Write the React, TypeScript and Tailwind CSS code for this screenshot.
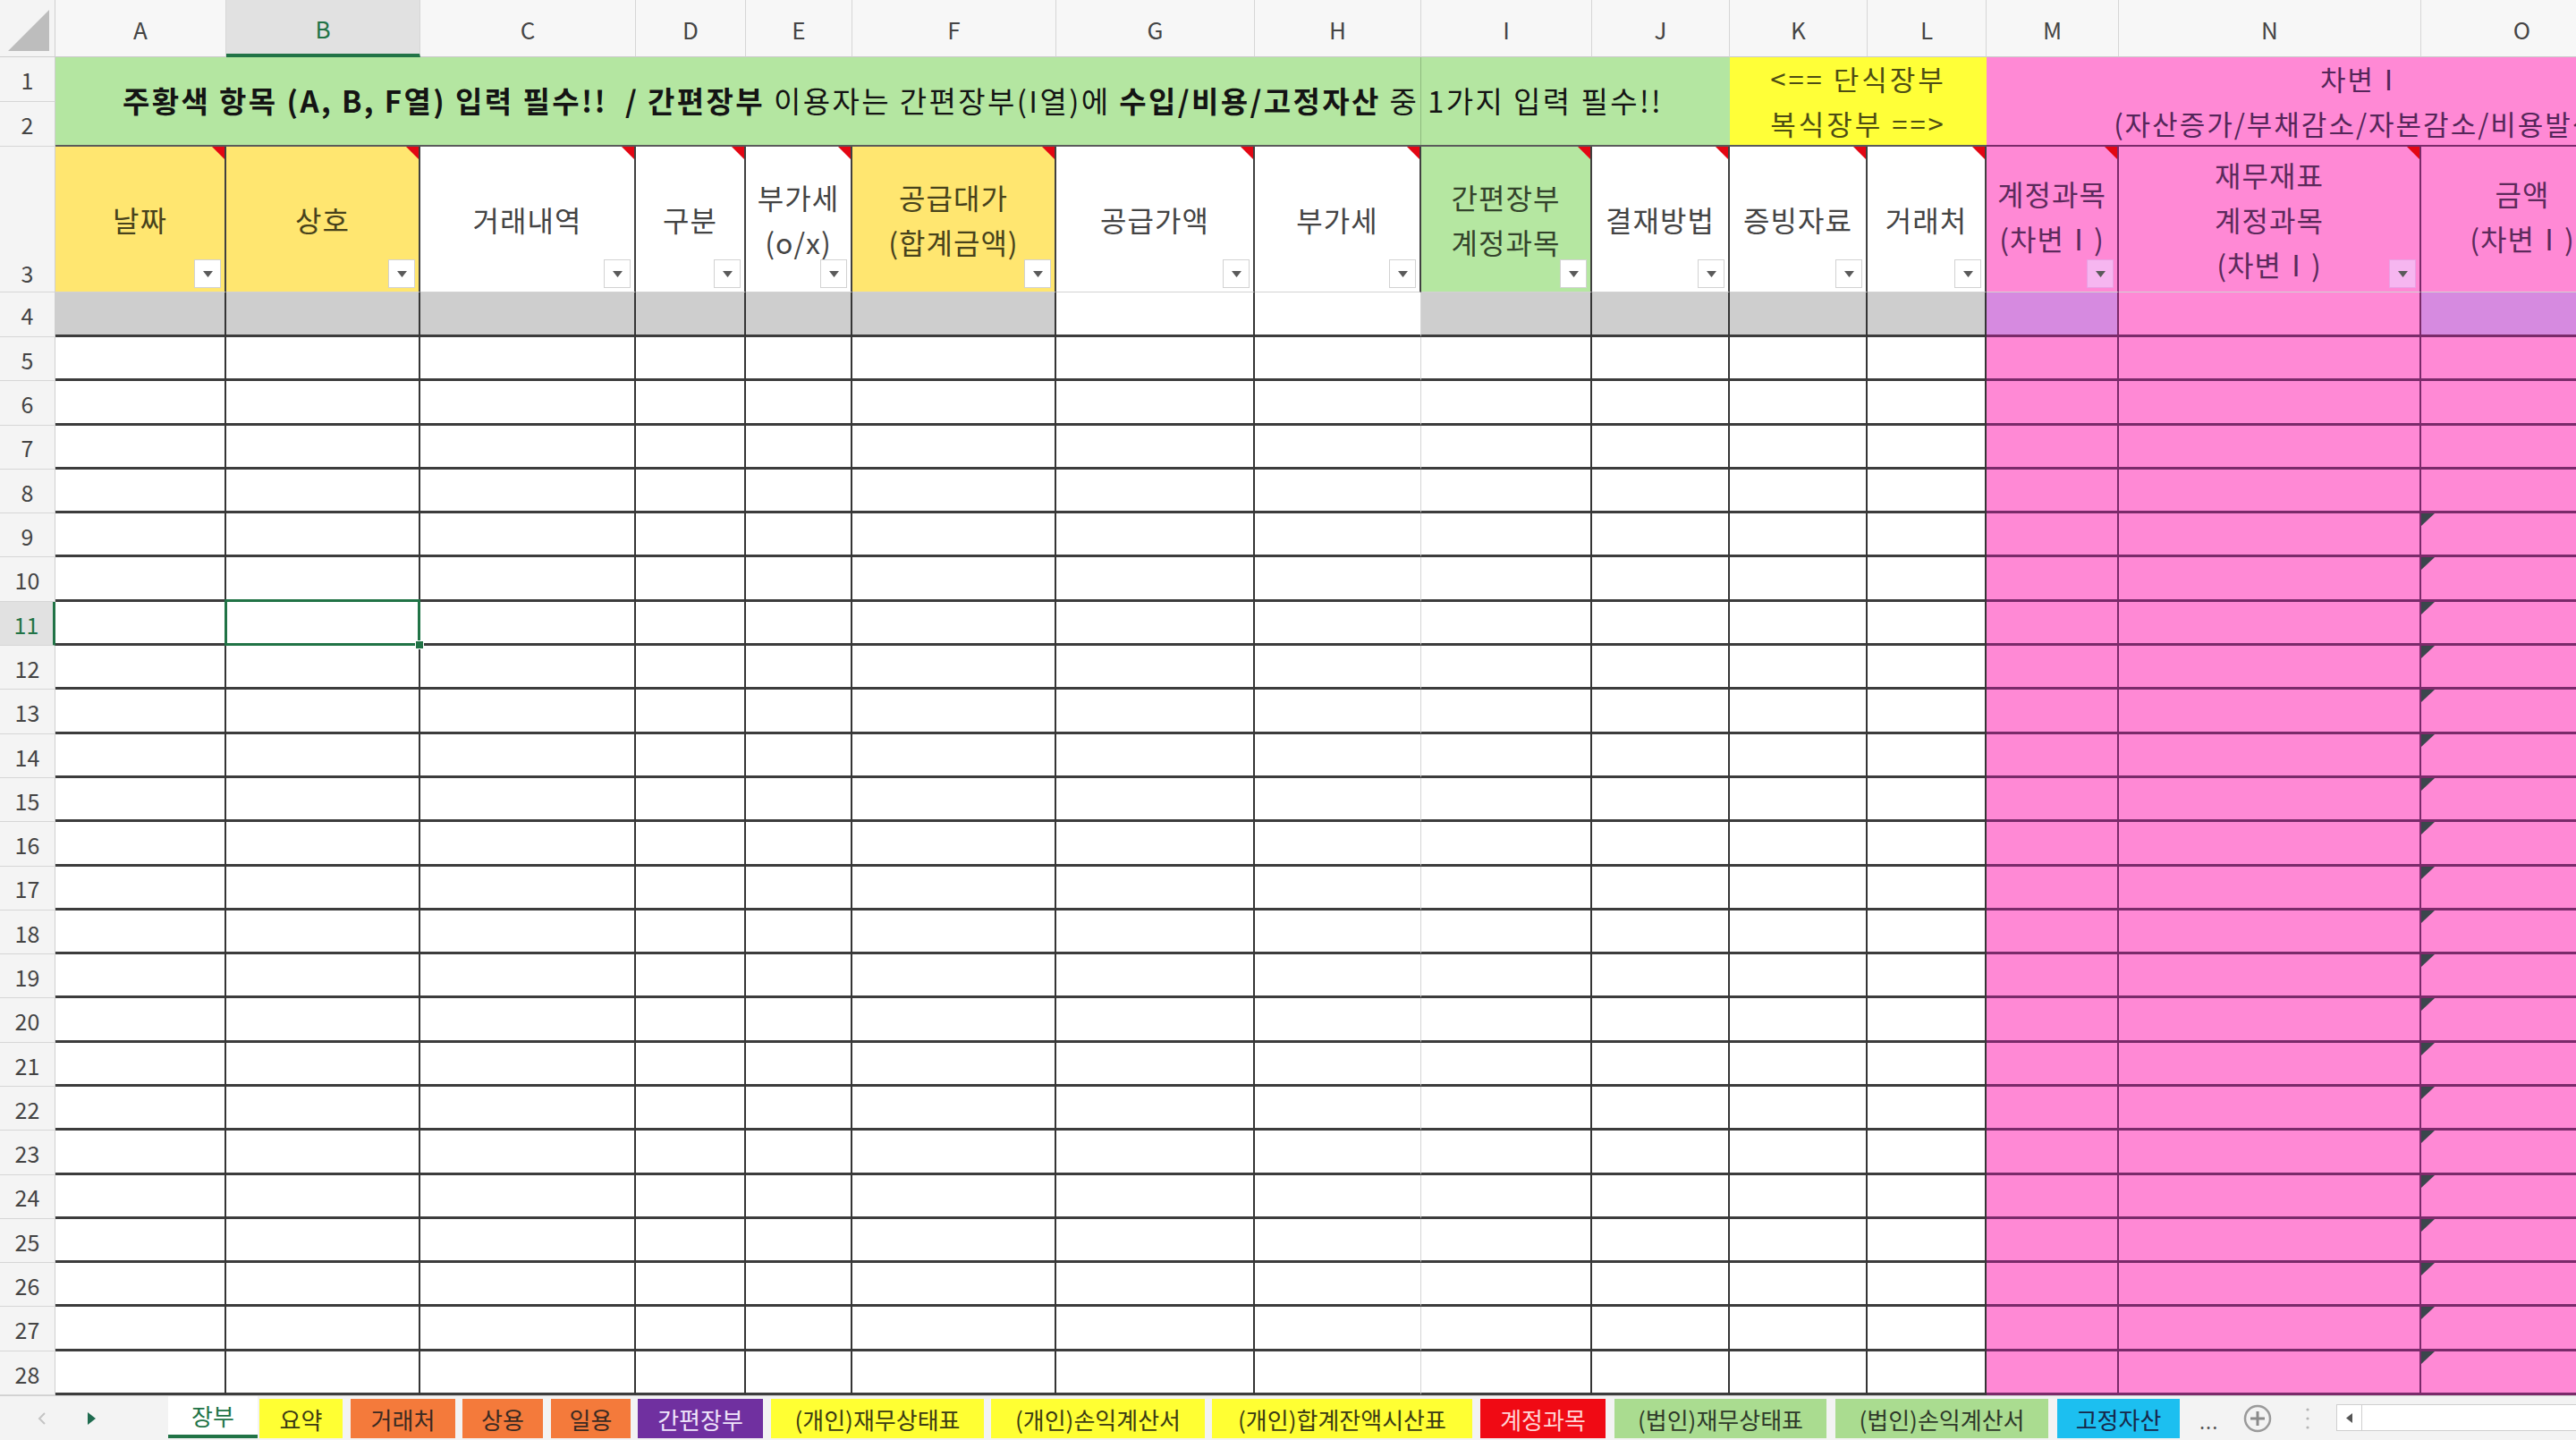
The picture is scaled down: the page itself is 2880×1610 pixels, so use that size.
import React from 'react';

const FONT = "font-['Noto_Sans_CJK_KR','Noto_Sans',sans-serif]";

const LETTERS = ['A', 'B', 'C', 'D', 'E', 'F', 'G', 'H', 'I', 'J', 'K', 'L', 'M', 'N', 'O'];

// row 3 header definitions
const HEADS = [
  { lines: ['날짜'], tone: 'yellow' },
  { lines: ['상호'], tone: 'yellow' },
  { lines: ['거래내역'], tone: 'white' },
  { lines: ['구분'], tone: 'white' },
  { lines: ['부가세', '(o/x)'], tone: 'white' },
  { lines: ['공급대가', '(합계금액)'], tone: 'yellow' },
  { lines: ['공급가액'], tone: 'white' },
  { lines: ['부가세'], tone: 'white' },
  { lines: ['간편장부', '계정과목'], tone: 'green' },
  { lines: ['결재방법'], tone: 'white' },
  { lines: ['증빙자료'], tone: 'white' },
  { lines: ['거래처'], tone: 'white' },
  { lines: ['계정과목', '(차변Ⅰ)'], tone: 'pink' },
  { lines: ['재무재표', '계정과목', '(차변Ⅰ)'], tone: 'pink' },
  { lines: ['금액', '(차변Ⅰ)'], tone: 'pink' },
];

const TONE: Record<string, string> = {
  yellow: 'bg-[#ffe670] text-[#47421c]',
  white: 'bg-white text-[#444444]',
  green: 'bg-[#b5e7a1] text-[#34432c]',
  pink: 'bg-[#ff89d5] text-[#5c2a5c]',
};

const TABS = [
  { t: '장부', cls: 'w-[100px] bg-white text-[#217346] border-b-[4px] border-[#217346] h-[47px] mt-0', active: true },
  { t: '요약', cls: 'w-[93px] ml-[2px] bg-[#ffff33] text-[#3b3b14]' },
  { t: '거래처', cls: 'w-[117px] ml-[9px] bg-[#f47a3b] text-[#3a2a22]' },
  { t: '상용', cls: 'w-[90px] ml-[8px] bg-[#f47a3b] text-[#3a2a22]' },
  { t: '일용', cls: 'w-[89px] ml-[9px] bg-[#f47a3b] text-[#3a2a22]' },
  { t: '간편장부', cls: 'w-[140px] ml-[8px] bg-[#7030a0] text-[#efe4fb]' },
  { t: '(개인)재무상태표', cls: 'w-[238px] ml-[9px] bg-[#ffff33] text-[#3b3b14]' },
  { t: '(개인)손익계산서', cls: 'w-[239px] ml-[8px] bg-[#ffff33] text-[#3b3b14]' },
  { t: '(개인)합계잔액시산표', cls: 'w-[291px] ml-[8px] bg-[#ffff33] text-[#3b3b14]' },
  { t: '계정과목', cls: 'w-[140px] ml-[9px] bg-[#f00a14] text-[#ffd4d4]' },
  { t: '(법인)재무상태표', cls: 'w-[237px] ml-[10px] bg-[#aadc90] text-[#2f3a2a]' },
  { t: '(법인)손익계산서', cls: 'w-[238px] ml-[10px] bg-[#aadc90] text-[#2f3a2a]' },
  { t: '고정자산', cls: 'w-[137px] ml-[10px] bg-[#1cbff0] text-[#17284a]' },
];

const RedMark = () => (
  <svg className="absolute top-0 right-0" width="14" height="14" viewBox="0 0 14 14">
    <polygon points="0,0 14,0 14,14" fill="#e30613" />
  </svg>
);

const FilterBtn = ({ pink }: { pink?: boolean }) => (
  <div
    className={`absolute right-[4px] bottom-[4px] w-[30px] h-[32px] flex items-center justify-center border ${
      pink ? 'bg-[#f6b6f0] border-[#e9a0e4]' : 'bg-white border-[#d2d2d2]'
    }`}
  >
    <svg width="11" height="7" viewBox="0 0 11 7">
      <polygon points="0,0 11,0 5.5,7" fill="#5a5a5a" />
    </svg>
  </div>
);

const ErrMark = () => (
  <svg className="absolute top-0 left-0" width="15" height="14" viewBox="0 0 15 14">
    <polygon points="0,0 15,0 0,14" fill="#3a464c" />
  </svg>
);

const RowNum = ({ n, active, bottom }: { n: string; active?: boolean; bottom?: boolean }) => (
  <div
    className={`flex justify-center ${bottom ? 'items-end pb-[2px]' : 'items-center pt-[3px]'} text-[25px] border-b border-[#d6d6d6] ${
      active ? 'bg-[#e1e1e1] text-[#217346] border-r-[3px] border-r-[#217346]' : 'bg-[#f4f4f4] text-[#444444] border-r border-r-[#cfcfcf]'
    }`}
  >
    {n}
  </div>
);

export default function App() {
  const dataRows = Array.from({ length: 24 }, (_, i) => i + 5);

  return (
    <div className={`w-[2880px] h-[1610px] flex flex-col overflow-hidden bg-white ${FONT}`}>
      <div className="flex-1 min-h-0 overflow-hidden">
        <div className="w-[2933px] h-full grid grid-cols-[62px_191px_217px_241px_123px_119px_228px_222px_186px_191px_154px_154px_133px_148px_338px_226px] grid-rows-[64px_50px_50px_163px_50px_repeat(24,minmax(0,1fr))]">
          {/* corner */}
          <div className="relative bg-[#f4f4f4] border-r border-b border-[#cfcfcf]">
            <svg className="absolute right-[6px] bottom-[6px]" width="46" height="46" viewBox="0 0 46 46">
              <polygon points="0,46 46,46 46,0" fill="#bdbdbd" />
            </svg>
          </div>
          {/* column letters */}
          {LETTERS.map((l) => (
            <div
              key={l}
              className={`flex items-center justify-center text-[26px] pt-[2px] border-r border-[#d6d6d6] ${
                l === 'B'
                  ? 'bg-[#e1e1e1] text-[#217346] border-b-[4px] border-b-[#217346]'
                  : 'bg-[#f7f7f7] text-[#454545] border-b border-b-[#c9c9c9]'
              }`}
            >
              {l}
            </div>
          ))}

          {/* rows 1-2 */}
          <RowNum n="1" />
          <div className="relative col-span-10 row-span-2 bg-[#b4e6a1] border-b-2 border-[#5a5a5a] flex items-center justify-center text-[33px] tracking-[2.4px] text-[#141414] whitespace-nowrap">
            <div className="absolute left-[1526px] top-0 bottom-0 w-px bg-[#8fb97f]" />
            <span className="relative">
              <b>주황색 항목 (A, B, F열) 입력 필수!!&nbsp; / 간편장부</b> 이용자는 간편장부(I열)에 <b>수입/비용/고정자산</b> 중 1가지 입력 필수!!
            </span>
          </div>
          <div className="col-span-2 row-span-2 bg-[#ffff38] border-b-2 border-[#5a5a5a] flex flex-col items-center justify-center text-[31px] tracking-[3px] text-[#4d4d14] leading-[50px] whitespace-nowrap">
            <div>&lt;== 단식장부</div>
            <div>복식장부 ==&gt;</div>
          </div>
          <div className="col-span-3 row-span-2 bg-[#ff89d5] border-b-2 border-[#7a2a6a] overflow-hidden">
            <div className="w-[840px] h-full flex flex-col items-center justify-center text-[31px] tracking-[2px] text-[#55265a] leading-[50px] whitespace-nowrap">
              <div>차변Ⅰ</div>
              <div>(자산증가/부채감소/자본감소/비용발생)</div>
            </div>
          </div>
          <RowNum n="2" />

          {/* row 3 headers */}
          <RowNum n="3" bottom />
          {HEADS.map((h, i) => (
            <div
              key={i}
              className={`relative flex flex-col items-center justify-center text-[32px] tracking-[1px] leading-[50px] whitespace-nowrap border-b border-b-[#d2d2d2] ${
                i === 14 ? '' : h.tone === 'pink' ? 'border-r-2 border-r-[#7a2a6a]' : 'border-r-2 border-r-[#404040]'
              } ${TONE[h.tone]}`}
            >
              {h.lines.map((ln, j) => (
                <div key={j} className={h.lines.length === 2 && h.tone === 'pink' ? '-translate-y-[4px]' : ''}>
                  {ln}
                </div>
              ))}
              {i < 14 && <RedMark />}
              {i !== 14 && <FilterBtn pink={h.tone === 'pink'} />}
            </div>
          ))}

          {/* row 4 */}
          <RowNum n="4" />
          {LETTERS.map((l, i) => {
            const pinkCol = i >= 12;
            const bg =
              l === 'G' || l === 'H'
                ? 'bg-white'
                : l === 'M' || l === 'O'
                ? 'bg-[#d68ae0]'
                : l === 'N'
                ? 'bg-[#ff89d5]'
                : 'bg-[#cecece]';
            const br =
              i === 14
                ? ''
                : l === 'H'
                ? 'border-r border-r-[#d4d4d4]'
                : pinkCol
                ? 'border-r-2 border-r-[#7a2a6a]'
                : 'border-r-2 border-r-[#353535]';
            return (
              <div
                key={l}
                className={`${bg} ${br} border-b-[3px] ${pinkCol ? 'border-b-[#7a2a6a]' : 'border-b-[#3c3c3c]'}`}
              />
            );
          })}

          {/* data rows 5-28 */}
          {dataRows.map((r) => (
            <React.Fragment key={r}>
              <RowNum n={String(r)} active={r === 11} />
              {LETTERS.map((l, i) => {
                const pinkCol = i >= 12;
                const br =
                  i === 14
                    ? ''
                    : l === 'H'
                    ? 'border-r border-r-[#d4d4d4]'
                    : pinkCol
                    ? 'border-r-2 border-r-[#7a2a6a]'
                    : 'border-r-2 border-r-[#353535]';
                return (
                  <div
                    key={l}
                    className={`relative ${pinkCol ? 'bg-[#ff89d5] border-b-[#7a2a6a]' : 'bg-white border-b-[#3c3c3c]'} ${br} border-b-[3px]`}
                  >
                    {l === 'O' && r >= 9 && <ErrMark />}
                    {l === 'B' && r === 11 && (
                      <>
                        <div className="absolute -left-[2px] -top-[3px] -right-[2px] -bottom-[3px] border-[3px] border-[#217346] z-10" />
                        <div className="absolute -right-[6px] -bottom-[7px] w-[10px] h-[10px] bg-[#217346] border border-white z-20" />
                      </>
                    )}
                  </div>
                );
              })}
            </React.Fragment>
          ))}
        </div>
      </div>

      {/* sheet tabs */}
      <div className="h-[50px] shrink-0 flex items-start bg-[#f3f3f3] border-t border-[#d0d0d0]">
        <div className="w-[188px] h-full flex items-center">
          <svg className="ml-[42px]" width="10" height="16" viewBox="0 0 10 16">
            <polyline points="8,2 2,8 8,14" fill="none" stroke="#c4c4c4" strokeWidth="2" />
          </svg>
          <svg className="ml-[46px]" width="9" height="14" viewBox="0 0 9 14">
            <polygon points="0,0 9,7 0,14" fill="#1f6b4f" />
          </svg>
        </div>
        {TABS.map((tab) => (
          <div
            key={tab.t}
            className={`${tab.active ? '' : 'h-[44px] mt-[3px]'} ${tab.cls} flex items-center justify-center text-[26px] whitespace-nowrap shrink-0`}
          >
            {tab.t}
          </div>
        ))}
        <div className="h-full flex items-center ml-[22px] text-[22px] text-[#555] tracking-[1px] pt-[6px]">...</div>
        <div className="h-full flex items-center ml-[28px]">
          <svg width="32" height="32" viewBox="0 0 32 32">
            <circle cx="16" cy="16" r="14" fill="none" stroke="#9a9a9a" strokeWidth="2.5" />
            <line x1="16" y1="8" x2="16" y2="24" stroke="#8a8a8a" strokeWidth="3" />
            <line x1="8" y1="16" x2="24" y2="16" stroke="#8a8a8a" strokeWidth="3" />
          </svg>
        </div>
        <div className="h-full flex items-center ml-[38px]">
          <svg width="4" height="26" viewBox="0 0 4 26">
            <circle cx="2" cy="3" r="1.6" fill="#b5b5b5" />
            <circle cx="2" cy="13" r="1.6" fill="#b5b5b5" />
            <circle cx="2" cy="23" r="1.6" fill="#b5b5b5" />
          </svg>
        </div>
        <div className="flex-1 h-[30px] mt-[9px] ml-[30px] flex bg-white border border-[#cfcfcf] border-r-0">
          <div className="w-[28px] h-full flex items-center justify-center border-r border-[#cfcfcf]">
            <svg width="7" height="11" viewBox="0 0 7 11">
              <polygon points="7,0 0,5.5 7,11" fill="#555" />
            </svg>
          </div>
        </div>
      </div>
    </div>
  );
}
